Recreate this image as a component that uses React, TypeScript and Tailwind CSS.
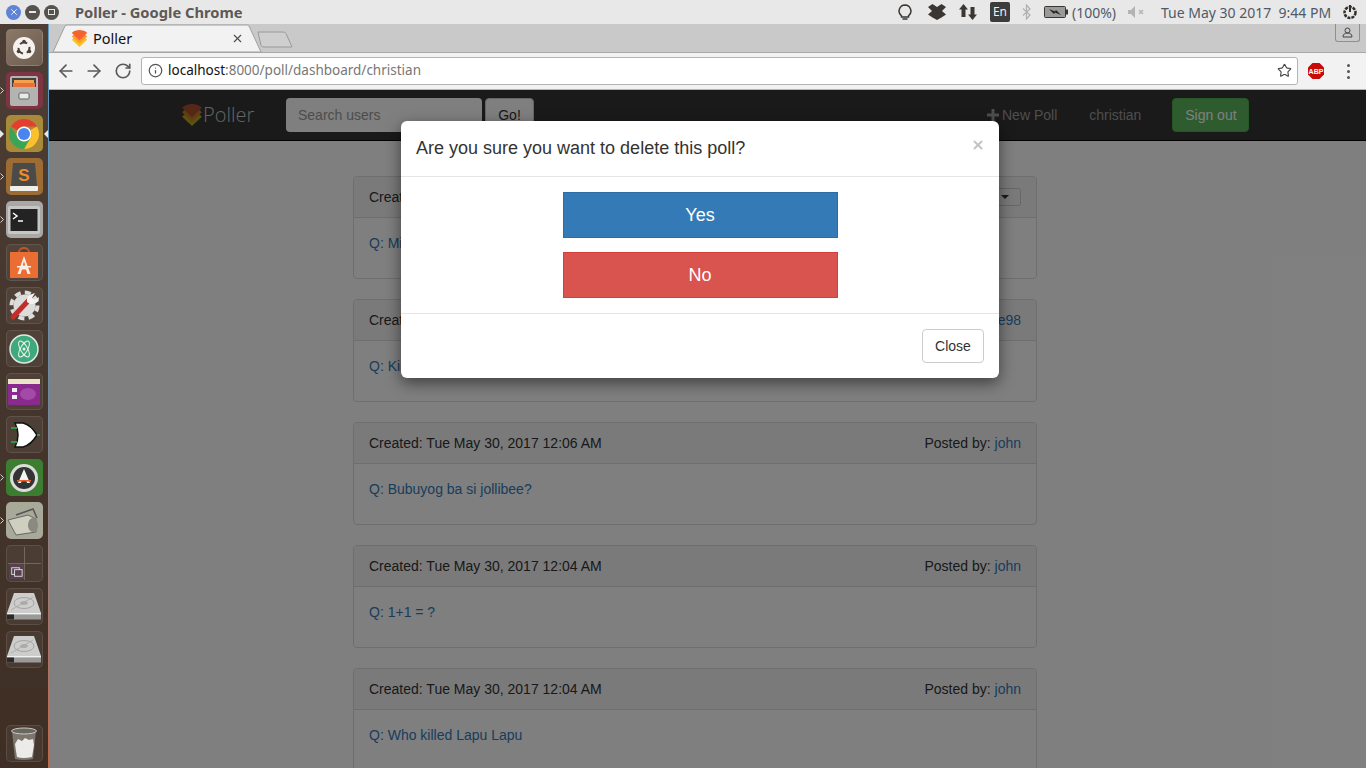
import { ReactNode } from "react"
import { ArrowLeft, ArrowRight, RotateCw, Info, Star, X } from "lucide-react"

const polls = [
  { created: "Tue May 30, 2017 12:20 AM", q: "Q: Mis Universe 2017", by: "menu" },
  { created: "Tue May 30, 2017 12:10 AM", q: "Q: Kinsa pinaka gwapo?", by: "jane98" },
  { created: "Tue May 30, 2017 12:06 AM", q: "Q: Bubuyog ba si jollibee?", by: "john" },
  { created: "Tue May 30, 2017 12:04 AM", q: "Q: 1+1 = ?", by: "john" },
  { created: "Tue May 30, 2017 12:04 AM", q: "Q: Who killed Lapu Lapu", by: "john" },
]

const chevron = "M10 0c3 0 7 1 9 3.500L10 12 1 3.500C3 1 7 0 10 0z"

const PollerLogo = ({ size, dim }: { size: number; dim?: boolean }) => (
  <svg width={size} height={size} viewBox="0 0 20 20">
    <path d={chevron} transform="translate(0 8)" fill={dim ? "#b9a11f" : "#fcc419"} />
    <path d={chevron} transform="translate(0 4)" fill={dim ? "#c07a28" : "#fd9a2c"} />
    <path d={chevron} fill={dim ? "#a84f2c" : "#f4622e"} />
  </svg>
)

const Tile = ({ bg, children, arrow, active }: { bg?: string; children: ReactNode; arrow?: boolean; active?: boolean }) => (
  <div className="relative h-[43px] w-[48px] flex items-center justify-center">
    {arrow && !active && (
      <svg className="absolute left-0 top-[18px]" width="4" height="7" viewBox="0 0 4 7">
        <path d="M0.500 0.500 3.500 3.500 0.500 6.500" fill="none" stroke="#d8d8d8" />
      </svg>
    )}
    {active && <span className="absolute left-0 top-[18px] border-y-[4px] border-l-[4px] border-y-transparent border-l-[#e8e8e8]" />}
    {active && <span className="absolute right-0 top-[18px] border-y-[4px] border-r-[4px] border-y-transparent border-r-[#e8e8e8]" />}
    <div className={`h-[37px] w-[37px] rounded-[5px] flex items-center justify-center ${bg ?? "bg-white/5 border border-white/10"}`}>{children}</div>
  </div>
)

const DriveIcon = () => (
  <svg width="34" height="30" viewBox="0 0 34 30">
    <path d="M7 1h20l7 20v3H0v-3z" fill="#cdcdcb" />
    <ellipse cx="17" cy="11" rx="10" ry="5.500" fill="none" stroke="#a5a5a3" />
    <ellipse cx="17" cy="11" rx="3.500" ry="1.500" fill="#b0b0ae" stroke="#999" strokeWidth="0.500" />
    <path d="M4 18 26 5" stroke="#a5a5a3" strokeWidth="0.800" />
    <rect x="0" y="21" width="34" height="1.500" fill="#f2f2f0" />
    <rect x="0" y="22.500" width="34" height="5" fill="#9a9a98" />
    <rect x="0" y="22.500" width="7" height="5" fill="#2a2a2a" />
  </svg>
)

const Launcher = () => (
  <div className="flex h-full shrink-0">
    <aside className="w-[48px] h-full flex flex-col pt-[2px] pb-[3px] bg-gradient-to-b from-[#4c3e35] to-[#3e2e24]">
      <Tile bg="bg-gradient-to-br from-[#8a7868] to-[#6e5e50] border border-white/10">
        <svg width="30" height="30" viewBox="0 0 30 30">
          <circle cx="15" cy="15" r="11" fill="#f4f1ee" />
          <circle cx="15" cy="15" r="5.500" fill="none" stroke="#4d3f36" strokeWidth="2" strokeDasharray="7.500 4" strokeDashoffset="2" />
          <circle cx="15" cy="8.500" r="1.800" fill="#4d3f36" />
          <circle cx="9.500" cy="18.500" r="1.800" fill="#4d3f36" />
          <circle cx="20.500" cy="18.500" r="1.800" fill="#4d3f36" />
        </svg>
      </Tile>
      <Tile bg="bg-[#7f3443]" arrow>
        <svg width="30" height="32" viewBox="0 0 30 32">
          <rect x="1" y="1" width="28" height="30" rx="2" fill="#b3b3b1" />
          <rect x="3" y="3" width="24" height="9" fill="#44413e" />
          <rect x="5" y="5" width="20" height="3" fill="#f6a04d" />
          <rect x="4" y="8" width="22" height="4" fill="#e8703a" />
          <rect x="10" y="18" width="10" height="6" rx="1" fill="#e8e8e6" stroke="#666" />
        </svg>
      </Tile>
      <Tile bg="bg-[#a9893a]" active>
        <svg width="32" height="32" viewBox="0 0 32 32">
          <path d="M16 1a15 15 0 0 1 13 7.500H16a7.500 7.500 0 0 0-6.500 3.750L3 8.500A15 15 0 0 1 16 1z" fill="#e53d30" />
          <path d="M29 8.500A15 15 0 0 1 16 31l6.500-11.250A7.500 7.500 0 0 0 22.500 12z" fill="#fbc02d" />
          <path d="M16 31A15 15 0 0 1 3 8.500l6.500 11.250a7.500 7.500 0 0 0 13 0z" fill="#3aa655" />
          <circle cx="16" cy="16" r="7.500" fill="#fff" />
          <circle cx="16" cy="16" r="6" fill="#4a85ee" />
        </svg>
      </Tile>
      <Tile bg="bg-[#9c6c34]" arrow>
        <svg width="32" height="32" viewBox="0 0 32 32">
          <path d="M5 2h22l2 23H3z" fill="#4a4a48" />
          <rect x="2" y="25" width="28" height="5" rx="1" fill="#f0efe9" />
          <text x="16" y="20" textAnchor="middle" fontSize="17" fontWeight="700" fontFamily="'Liberation Sans', sans-serif" fill="#f08a24">S</text>
        </svg>
      </Tile>
      <Tile bg="bg-[#a8a8a6]" arrow>
        <svg width="32" height="28" viewBox="0 0 32 28">
          <rect x="0" y="0" width="32" height="28" rx="2" fill="#c6c6c4" />
          <rect x="2.500" y="3" width="27" height="22" fill="#232323" />
          <path d="M5 7l4 3-4 3" fill="none" stroke="#fff" strokeWidth="1.500" />
          <path d="M10 15h5" stroke="#fff" strokeWidth="1.500" />
        </svg>
      </Tile>
      <Tile>
        <svg width="30" height="34" viewBox="0 0 30 34">
          <path d="M10 6a5 4 0 0 1 10 0" fill="none" stroke="#c4532a" strokeWidth="2" />
          <path d="M1 6h28v26H1z" fill="#ea6d34" />
          <path d="M15 10l6.500 18h-3l-1.500-4.500h-4L11.500 28h-3z" fill="#fbeee6" />
          <path d="M15 15l-1.200 4.500h2.400z" fill="#ea6d34" />
          <rect x="8" y="20" width="14" height="1.500" fill="#fbeee6" />
        </svg>
      </Tile>
      <Tile>
        <svg width="33" height="33" viewBox="0 0 33 33">
          <circle cx="16.500" cy="16.500" r="11" fill="#dcdcda" />
          <circle cx="16.500" cy="16.500" r="13" fill="none" stroke="#dcdcda" strokeWidth="4" strokeDasharray="6 4.200" />
          <path d="M5 28 21 11" stroke="#c22f2a" strokeWidth="5" strokeLinecap="round" />
          <path d="M19 13q-1-7 5-8l3-1-3 5 3 2 4-3q0 6-6 7-2 0-3 0z" fill="#f2f2f2" />
        </svg>
      </Tile>
      <Tile>
        <svg width="30" height="30" viewBox="0 0 30 30">
          <circle cx="15" cy="15" r="14" fill="#3fa97c" stroke="#dfe9e4" strokeWidth="1.500" />
          <ellipse cx="15" cy="15" rx="9" ry="3.500" fill="none" stroke="#e8f5ef" transform="rotate(60 15 15)" />
          <ellipse cx="15" cy="15" rx="9" ry="3.500" fill="none" stroke="#e8f5ef" transform="rotate(-60 15 15)" />
          <circle cx="15" cy="15" r="1.500" fill="#e8f5ef" />
        </svg>
      </Tile>
      <Tile>
        <svg width="32" height="26" viewBox="0 0 32 26">
          <rect width="32" height="26" rx="1" fill="#8b2a8e" />
          <rect width="32" height="5" fill="#e9e3c8" />
          <rect x="4" y="9" width="5" height="4" fill="#eee" />
          <rect x="4" y="16" width="5" height="4" fill="#eee" />
          <ellipse cx="20" cy="15" rx="8" ry="6" fill="#a34aa6" />
        </svg>
      </Tile>
      <Tile>
        <svg width="32" height="30" viewBox="0 0 32 30">
          <path d="M7 3h8q8 2 14 12q-6 10-14 12H7q6-12 0-24z" fill="#fff" stroke="#111" strokeWidth="1.500" />
          <path d="M3 8h6M3 22h6" stroke="#2a9a3c" strokeWidth="2" />
          <path d="M29 15h3" stroke="#2a9a3c" strokeWidth="2" />
        </svg>
      </Tile>
      <Tile bg="bg-[#3d7d32]" arrow>
        <svg width="32" height="32" viewBox="0 0 32 32">
          <circle cx="16" cy="16" r="14" fill="#dcdcdc" />
          <circle cx="16" cy="16" r="11" fill="#333" />
          <path d="M16 7l6 14h-3l-1-3h-4l-1 3h-3z" fill="#f4f4f4" />
          <rect x="9" y="18" width="14" height="1.500" fill="#e8602c" />
        </svg>
      </Tile>
      <Tile bg="bg-[#a9a999]" arrow>
        <svg width="34" height="30" viewBox="0 0 34 30">
          <path d="M9 9 26 3l4 9" fill="none" stroke="#555" strokeWidth="1.500" />
          <path d="M1 14l20-5 8 4v13l-20 3z" fill="#cfcfc0" stroke="#666" />
          <ellipse cx="26" cy="19" rx="5" ry="7" fill="#8a8a80" />
        </svg>
      </Tile>
      <Tile>
        <svg width="37" height="37" viewBox="0 0 37 37">
          <path d="M18.500 1v35M1 18.500h35" stroke="#7a6a5e" />
          <rect x="2" y="19" width="16" height="16" fill="#574050" />
          <rect x="5" y="23" width="8" height="7" fill="none" stroke="#ddd" />
          <rect x="8" y="25" width="8" height="7" fill="#574050" stroke="#ddd" />
        </svg>
      </Tile>
      <Tile><DriveIcon /></Tile>
      <Tile><DriveIcon /></Tile>
      <div className="flex-1" />
      <Tile>
        <svg width="28" height="34" viewBox="0 0 28 34">
          <path d="M2 4l3 28q9 2 18 0l3-28z" fill="#8a8680" opacity="0.800" />
          <ellipse cx="14" cy="4" rx="12.500" ry="3" fill="#6b665f" stroke="#c8c8c4" />
          <path d="M5 17l3-5 4 2 3-3 4 2 4-1 1 6-1 6-1 6q-9 2-15 0l-1-6z" fill="#ecebea" />
        </svg>
      </Tile>
    </aside>
    <div className="w-[1px] h-full bg-gradient-to-b from-[#5b9bc8] via-[#6f8aa0] via-50% to-[#c0684a]" />
  </div>
)

const TopPanel = () => (
  <header className="h-[24px] shrink-0 bg-[#e8e8e8] flex items-center font-['Noto_Sans',sans-serif] text-[#55504c]">
    <div className="flex items-center gap-[4px] pl-[6px]">
      <span className="w-[15px] h-[15px] rounded-full bg-[#5f84d6] flex items-center justify-center"><X size={10} color="#fff" strokeWidth={2} /></span>
      <span className="w-[15px] h-[15px] rounded-full bg-[#56524e] flex items-center justify-center"><span className="w-[7px] h-[2px] bg-[#e8e8e8]" /></span>
      <span className="w-[15px] h-[15px] rounded-full bg-[#56524e] flex items-center justify-center"><span className="w-[7px] h-[6px] border border-[#e8e8e8]" /></span>
    </div>
    <span className="ml-[16px] text-[14.7px] font-bold text-[#5d5955]">Poller - Google Chrome</span>
    <div className="flex-1" />
    <svg width="14" height="16" viewBox="0 0 14 16">
      <path d="M7 1a6 6 0 0 0-3.500 10.800V13h7v-1.200A6 6 0 0 0 7 1z" fill="none" stroke="#3b3632" strokeWidth="1.500" />
      <path d="M4.500 15h5" stroke="#3b3632" strokeWidth="1.500" />
    </svg>
    <svg className="ml-[16px]" width="18" height="16" viewBox="0 0 18 16">
      <path d="M4.500 0 9 3l4.500-3L18 3l-4 4 4 3.500-4.500 3L9 16l-4.500-2.500L0 10.500 4 7 0 3z" fill="#3b3632" />
    </svg>
    <svg className="ml-[13px]" width="18" height="16" viewBox="0 0 18 16">
      <path d="M4.500 0 9 5.500H6.500V13h-4V5.500H0zM13.500 16 18 10.500h-2.500V3h-4v7.500H9z" fill="#3b3632" />
    </svg>
    <span className="ml-[13px] w-[20px] h-[20px] rounded-[2px] bg-[#3c3c3c] text-[#f0f0f0] text-[12px] flex items-center justify-center">En</span>
    <svg className="ml-[12px]" width="9" height="16" viewBox="0 0 9 16">
      <path d="M1 4.500 8 11l-3.500 4V1L8 5 1 11.500" fill="none" stroke="#b0b0ae" strokeWidth="1.200" />
    </svg>
    <svg className="ml-[13px]" width="24" height="12" viewBox="0 0 24 12">
      <rect x="0.500" y="0.500" width="21" height="11" rx="1" fill="#9a9a98" stroke="#3b3632" />
      <rect x="22" y="3.500" width="2" height="5" fill="#3b3632" />
      <path d="M5 3l6 2.500 1-1.500 5 5-6-2.500-1 1.500z" fill="#222" />
    </svg>
    <span className="ml-[4px] text-[14px] text-[#4f5a68]">(100%)</span>
    <svg className="ml-[12px]" width="18" height="12" viewBox="0 0 18 12">
      <path d="M0 4h3l4-4v12l-4-4H0z" fill="#b4b4b2" />
      <path d="M11 4l4 4m0-4-4 4" stroke="#b4b4b2" strokeWidth="1.500" />
    </svg>
    <span className="ml-[15px] text-[14px] text-[#4f5a68] whitespace-pre w-[168px]">Tue May 30 2017  9:44 PM</span>
    <svg className="ml-[13px] mr-[8px]" width="16" height="16" viewBox="0 0 16 16">
      <circle cx="8" cy="8.500" r="5.500" fill="none" stroke="#322e2a" strokeWidth="2.500" strokeDasharray="3 1" />
      <path d="M8 1v7" stroke="#322e2a" strokeWidth="2" />
    </svg>
  </header>
)

const TabStrip = () => (
  <div className="relative h-[29px] shrink-0 bg-[#c9c9c9] border-b border-[#a8a8a8]">
    <svg className="absolute left-0 top-0" width="300" height="29" viewBox="0 0 300 29">
      <path d="M4 28 16 2q1-1 2-1h180q1 0 2 1l12 26z" fill="#f2f2f2" stroke="#a0a0a0" />
      <path d="M209 8h25q2 0 3 1.500l6 13.500h-28q-2 0-3-1.500z" fill="#cfcfcf" stroke="#9a9a9a" />
    </svg>
    <div className="absolute left-[22px] top-[6px] w-[17px]"><PollerLogo size={17} /></div>
    <span className="absolute left-[44px] top-[4px] text-[14.5px] leading-[20px] text-[#111] font-['Noto_Sans',sans-serif]">Poller</span>
    <X className="absolute left-[182px] top-[8px] text-[#4a4a4a]" size={13} strokeWidth={2} />
    <div className="absolute right-[6px] top-0 w-[25px] h-[18px] border border-t-0 border-[#8f8f8f] rounded-b-[3px] flex items-center justify-center">
      <svg width="11" height="11" viewBox="0 0 11 11">
        <circle cx="5.500" cy="3.500" r="2.500" fill="none" stroke="#444" />
        <path d="M1 10c0-3 2-4 4.500-4S10 7 10 10z" fill="none" stroke="#444" />
      </svg>
    </div>
  </div>
)

const Toolbar = () => (
  <div className="h-[37px] shrink-0 bg-[#f2f2f2] border-b border-[#b5b5b5] flex items-center pl-[7px]">
    <ArrowLeft size={20} color="#5a5a5a" strokeWidth={2} />
    <ArrowRight className="ml-[8px]" size={20} color="#5a5a5a" strokeWidth={2} />
    <RotateCw className="ml-[10px]" size={18} color="#5a5a5a" strokeWidth={2.200} />
    <div className="ml-[9px] w-[1157px] h-[28px] bg-white border border-[#b4b4b4] rounded-[3px] flex items-center pl-[6px] pr-[5px] pb-[1px] font-['Noto_Sans',sans-serif] text-[13.5px]">
      <Info size={15} color="#555" strokeWidth={2} />
      <span className="ml-[5px] text-[#111]">localhost</span>
      <span className="text-[#777]">:8000/poll/dashboard/christian</span>
      <Star className="ml-auto" size={15} color="#444" strokeWidth={1.800} />
    </div>
    <svg className="ml-[9px]" width="18" height="18" viewBox="0 0 18 18">
      <path d="M5.500 1h7L17 5.500v7L12.500 17h-7L1 12.500v-7z" fill="#c80a0a" />
      <text x="9" y="12" textAnchor="middle" fontSize="7" fontWeight="700" fontFamily="'Liberation Sans', sans-serif" fill="#fff">ABP</text>
    </svg>
    <div className="ml-[22px] flex flex-col gap-[3px]">
      <span className="w-[3px] h-[3px] rounded-full bg-[#555]" />
      <span className="w-[3px] h-[3px] rounded-full bg-[#555]" />
      <span className="w-[3px] h-[3px] rounded-full bg-[#555]" />
    </div>
  </div>
)

const Navbar = () => (
  <nav className="h-[51px] shrink-0 bg-[#343434] border-b border-black flex items-start pt-[8px] pl-[132px] text-[14px]">
    <div className="w-[74px] h-[34px] flex items-center">
      <PollerLogo size={22} dim />
      <span className="text-[20px] text-[#c8c8c8] font-['Open_Sans',sans-serif] font-light">Poller</span>
    </div>
    <div className="ml-[31px] w-[196px] h-[34px] bg-white rounded-[4px] px-[12px] leading-[34px] text-[#999]">Search users</div>
    <div className="ml-[3px] w-[49px] h-[34px] bg-white border border-[#ccc] rounded-[4px] text-center leading-[32px] text-[#333]">Go!</div>
    <div className="ml-[453px] h-[34px] flex items-center text-[#9d9d9d]">
      <svg width="12" height="12" viewBox="0 0 12 12">
        <path d="M4.500 0h3v4.500H12v3H7.500V12h-3V7.500H0v-3h4.500z" fill="currentColor" />
      </svg>
      <span className="ml-[3px]">New Poll</span>
      <span className="ml-[32px]">christian</span>
    </div>
    <div className="ml-[31px] w-[77px] h-[34px] bg-[#5cb85c] border border-[#4cae4c] rounded-[4px] text-center leading-[32px] text-white">Sign out</div>
  </nav>
)

const PollCard = ({ created, q, by }: { created: string; q: string; by: string }) => (
  <div className="w-[684px] h-[103px] mb-[20px] shrink-0 bg-white border border-[#ddd] rounded-[4px]">
    <div className="h-[41px] px-[15px] bg-[#f5f5f5] border-b border-[#ddd] rounded-t-[4px] flex items-center justify-between text-[#333]">
      <span>Created: {created}</span>
      {by === "menu" ? (
        <span className="h-[18px] w-[60px] border border-[#ccc] rounded-[3px] flex items-center justify-end pr-[11px]">
          <span className="border-x-[4px] border-t-[4px] border-x-transparent border-t-[#333]" />
        </span>
      ) : (
        <span>Posted by: <span className="text-[#337ab7]">{by}</span></span>
      )}
    </div>
    <div className="px-[15px] pt-[15px] text-[#337ab7]">{q}</div>
  </div>
)

const Modal = () => (
  <div className="absolute left-[352px] top-[31px] w-[598px] h-[257px] bg-white rounded-[6px] shadow-[0_5px_15px_rgba(0,0,0,0.5)] flex flex-col">
    <div className="h-[56px] shrink-0 border-b border-[#e5e5e5] px-[15px] flex items-center justify-between">
      <span className="text-[18px] text-[#333]">Are you sure you want to delete this poll?</span>
      <X className="-mt-[7px] -mr-[1px]" size={14} color="#c4c4c4" strokeWidth={3.500} />
    </div>
    <div className="flex-1 flex flex-col items-center gap-[14px] pt-[15px] border-b border-[#e5e5e5]">
      <div className="w-[275px] h-[46px] bg-[#337ab7] border border-[#2e6da4] text-white text-[18px] flex items-center justify-center">Yes</div>
      <div className="w-[275px] h-[46px] bg-[#d9534f] border border-[#d43f3a] text-white text-[18px] flex items-center justify-center">No</div>
    </div>
    <div className="h-[64px] shrink-0 flex items-center justify-end px-[15px]">
      <div className="w-[62px] h-[34px] bg-white border border-[#ccc] rounded-[4px] text-[14px] text-[#333] flex items-center justify-center">Close</div>
    </div>
  </div>
)

export default function App() {
  return (
    <div className="w-[1366px] h-[768px] overflow-hidden flex flex-col bg-white font-['Liberation_Sans',sans-serif] text-[14px]">
      <TopPanel />
      <div className="flex-1 flex min-h-0">
        <Launcher />
        <div className="flex-1 min-w-0 flex flex-col">
          <TabStrip />
          <Toolbar />
          <div className="relative flex-1 min-h-0 overflow-hidden">
            <div className="h-full flex flex-col">
              <Navbar />
              <div className="flex flex-col pt-[35px] pl-[304px]">
                {polls.map((p) => (
                  <PollCard key={p.q} created={p.created} q={p.q} by={p.by} />
                ))}
              </div>
            </div>
            <div className="absolute inset-0 bg-black/50" />
            <Modal />
          </div>
        </div>
      </div>
    </div>
  )
}
